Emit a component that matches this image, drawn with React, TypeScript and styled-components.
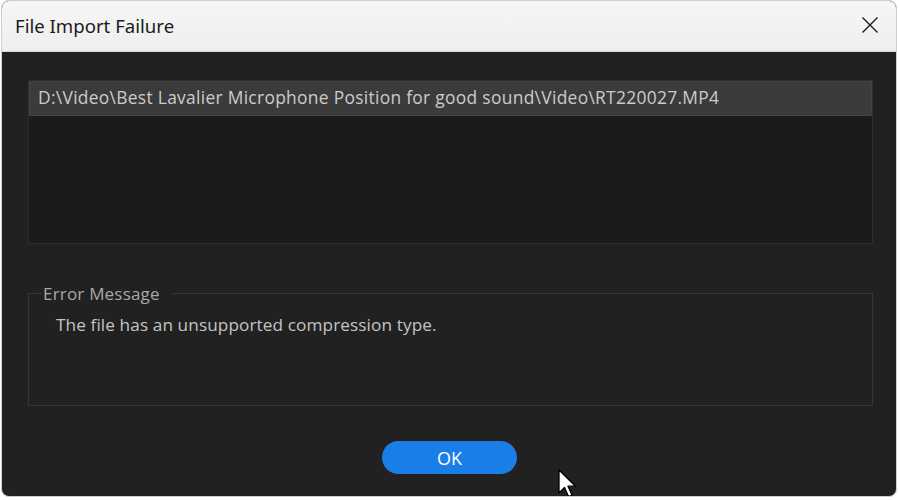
import styled, { createGlobalStyle } from "styled-components";

const Global = createGlobalStyle`
  html, body {
    margin: 0;
    padding: 0;
    background: #ffffff;
  }
  #root {
    width: 900px;
    height: 500px;
    overflow: hidden;
  }
`;

const Janela = styled.div`
  position: relative;
  width: 896px;
  height: 497px;
  margin-left: 1px;
  border-radius: 8px;
  overflow: hidden;
  border: 1px solid #cfcfcf;
  box-sizing: border-box;
  display: flex;
  flex-direction: column;
  background: #212121;
`;

const BarraTitulo = styled.div`
  height: 51px;
  flex-shrink: 0;
  display: flex;
  align-items: center;
  justify-content: space-between;
  padding: 0 14px 2px 13px;
  background: linear-gradient(#f6f6f6, #eeeeee);
  border-bottom: 1px solid #d6d6d6;
  box-sizing: border-box;
`;

const Titulo = styled.span`
  font-family: "Noto Sans", "Open Sans", sans-serif;
  font-size: 18.6px;
  color: #1b1b1b;
`;

const Fechar = styled.button`
  width: 24px;
  height: 24px;
  padding: 0;
  border: none;
  background: transparent;
  display: flex;
  align-items: center;
  justify-content: center;
`;

const Corpo = styled.div`
  flex: 1;
  display: flex;
  flex-direction: column;
  padding: 28px 23px 0 26px;
  font-family: "Open Sans", "Noto Sans", sans-serif;
`;

const Lista = styled.div`
  height: 164px;
  background: #1b1b1b;
  border: 1px solid #2d2d2d;
  box-sizing: border-box;
`;

const Linha = styled.div<{ $selecionada?: boolean }>`
  height: 35px;
  display: flex;
  align-items: center;
  padding: 0 0 3px 8px;
  box-sizing: border-box;
  font-size: 17.4px;
  letter-spacing: 0.3px;
  color: #cbcbcb;
  background: ${(p) => (p.$selecionada ? "#3b3b3b" : "transparent")};
  border: 1px solid ${(p) => (p.$selecionada ? "#444" : "transparent")};
`;

const Quadro = styled.fieldset`
  margin: 38px 0 0 0;
  height: 124px;
  padding: 0 0 0 27px;
  border: 1px solid #353535;
  box-sizing: border-box;
`;

const Legenda = styled.legend`
  margin-left: -14px;
  padding: 0 12px 0 1px;
  font-size: 17px;
  letter-spacing: 0.2px;
  color: #a8a8a8;
`;

const Mensagem = styled.p`
  margin: 8px 0 0 0;
  font-size: 17.2px;
  letter-spacing: 0.1px;
  color: #c4c4c4;
`;

const Rodape = styled.div`
  display: flex;
  justify-content: center;
  padding-top: 35px;
`;

const BotaoOk = styled.button`
  width: 135px;
  height: 33px;
  border: none;
  border-radius: 17px;
  background: #1a7ee9;
  color: #ffffff;
  font-family: "Open Sans", "Noto Sans", sans-serif;
  font-size: 18px;
  font-weight: 500;
  margin-right: 2px;
`;

const Cursor = styled.svg`
  position: absolute;
  left: 556px;
  top: 468px;
`;

export default function App() {
  return (
    <>
      <Global />
      <Janela>
        <BarraTitulo>
          <Titulo>File Import Failure</Titulo>
          <Fechar aria-label="Fechar">
            <svg width="18" height="18" viewBox="0 0 18 18">
              <path d="M1.5 1.5 L16.5 16.5 M16.5 1.5 L1.5 16.5" stroke="#1a1a1a" strokeWidth="1.4" />
            </svg>
          </Fechar>
        </BarraTitulo>
        <Corpo>
          <Lista>
            <Linha $selecionada>D:\Video\Best Lavalier Microphone Position for good sound\Video\RT220027.MP4</Linha>
          </Lista>
          <Quadro>
            <Legenda>Error Message</Legenda>
            <Mensagem>The file has an unsupported compression type.</Mensagem>
          </Quadro>
          <Rodape>
            <BotaoOk>OK</BotaoOk>
          </Rodape>
        </Corpo>
        <Cursor width="24" height="32" viewBox="0 0 24 32">
          <path d="M1 1 L1 24 L6.5 18.5 L10.5 27.5 L14 26 L10 17.2 L17.5 17.2 Z" fill="#ffffff" stroke="#000" strokeWidth="1.3" strokeLinejoin="round" />
        </Cursor>
      </Janela>
    </>
  );
}
